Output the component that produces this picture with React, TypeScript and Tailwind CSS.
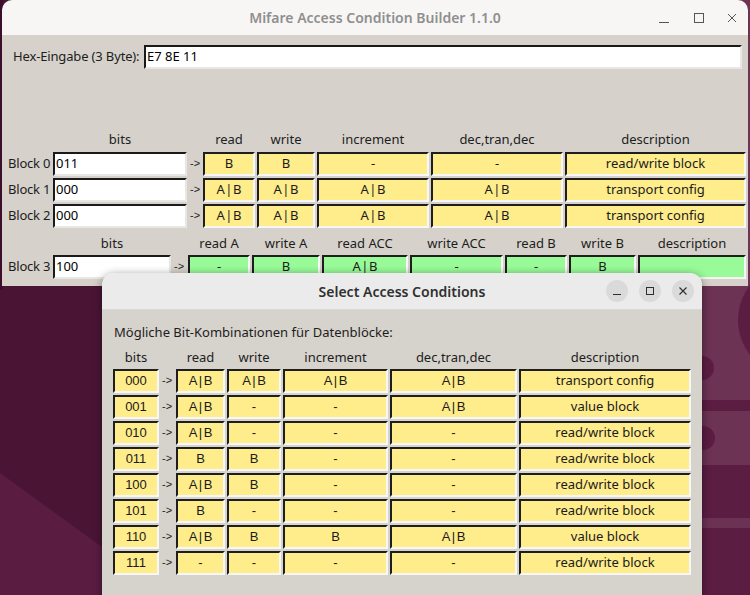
import React from 'react';

const ui = { fontFamily: '"Noto Sans", "Open Sans", sans-serif' };
const arial = { fontFamily: '"Liberation Sans", Arial, sans-serif' };

const sunken =
  'border-2 border-t-[#1e1e1e] border-l-[#1e1e1e] border-b-[#f7f7f7] border-r-[#f7f7f7]';

function show(v: string, wide: boolean) {
  if (!v.includes('|')) return v;
  const [a, b] = v.split('|');
  return (
    <>
      {a}
      <span className={wide ? 'mx-[1.5px]' : 'mx-[0.5px]'}>|</span>
      {b}
    </>
  );
}

function Cell({ w, bg, children, font }: { w: string; bg: string; children?: string; font?: React.CSSProperties }) {
  return (
    <div
      className={`${w} ${bg} ${sunken} h-[24px] flex items-center justify-center text-[13px] text-[#1b1b1b] shrink-0`}
      style={font}
    >
      {show(children ?? '', !!font)}
    </div>
  );
}

function Entry({ w, value }: { w: string; value: string }) {
  return (
    <div
      className={`${w} h-[24px] bg-white border-2 border-t-[#1a1a1a] border-l-[#1a1a1a] border-b-[#e9e7e3] border-r-[#e9e7e3] flex items-center pl-[1px] text-[13px] text-black shrink-0`}
    >
      {value}
    </div>
  );
}

function Arrow({ w }: { w: string }) {
  return (
    <div className={`${w} h-[24px] flex items-start pt-[3px] pl-[3px] text-[11px] text-[#222] shrink-0`} style={arial}>
      -&gt;
    </div>
  );
}

const dataCols = ['w-[52px]', 'w-[58px]', 'w-[112px]', 'w-[132px]', 'w-[181px]'];
const dataHead = ['read', 'write', 'increment', 'dec,tran,dec', 'description'];
const blocks = [
  { name: 'Block 0', bits: '011', vals: ['B', 'B', '-', '-', 'read/write block'] },
  { name: 'Block 1', bits: '000', vals: ['A|B', 'A|B', 'A|B', 'A|B', 'transport config'] },
  { name: 'Block 2', bits: '000', vals: ['A|B', 'A|B', 'A|B', 'A|B', 'transport config'] },
];

const trailCols = ['w-[62px]', 'w-[68px]', 'w-[86px]', 'w-[93px]', 'w-[62px]', 'w-[67px]', 'w-[108px]'];
const trailHead = ['read A', 'write A', 'read ACC', 'write ACC', 'read B', 'write B', 'description'];
const trailVals = ['-', 'B', 'A|B', '-', '-', 'B', ''];

const dlgCols = ['w-[49px]', 'w-[54px]', 'w-[105px]', 'w-[127px]', 'w-[172px]'];
const dlgRows = [
  ['000', 'A|B', 'A|B', 'A|B', 'A|B', 'transport config'],
  ['001', 'A|B', '-', '-', 'A|B', 'value block'],
  ['010', 'A|B', '-', '-', '-', 'read/write block'],
  ['011', 'B', 'B', '-', '-', 'read/write block'],
  ['100', 'A|B', 'B', '-', '-', 'read/write block'],
  ['101', 'B', '-', '-', '-', 'read/write block'],
  ['110', 'A|B', 'B', 'B', 'A|B', 'value block'],
  ['111', '-', '-', '-', '-', 'read/write block'],
];

function Wallpaper() {
  return (
    <svg className="absolute inset-0" width="750" height="595" viewBox="0 0 750 595">
      <rect width="750" height="595" fill="#4a1535" />
      <rect x="0" y="0" width="3" height="290" fill="#3c0e2b" />
      <polygon points="0,473 102,547 102,595 0,595" fill="#5b1c42" />
      <rect x="690" y="0" width="60" height="400" fill="#6c3354" />
      <rect x="690" y="400" width="60" height="11" fill="#5c1d42" />
      <rect x="690" y="411" width="60" height="54" fill="#6c3354" />
      <rect x="690" y="465" width="60" height="130" fill="#5c1d42" />
      <rect x="690" y="518" width="60" height="10" fill="#6b3253" />
      <circle cx="795" cy="320" r="57" fill="#5c1d42" />
      <circle cx="702" cy="368" r="12" fill="#5c1d42" />
      <circle cx="703" cy="438" r="12" fill="#5c1d42" />
    </svg>
  );
}

function MainWindow() {
  return (
    <div className="absolute left-[2px] top-0 w-[746px] h-[286px] rounded-t-[10px] overflow-hidden flex flex-col" style={ui}>
      <div className="h-[35px] bg-[#f7f6f5] relative flex items-center justify-center shrink-0">
        <span className="text-[14px] font-semibold text-[#8f8f8f]">Mifare Access Condition Builder 1.1.0</span>
        <div className="absolute right-0 top-0 h-full flex items-center">
          <svg width="14" height="14" viewBox="0 0 14 14" className="mr-[21px]">
            <line x1="2" y1="11.5" x2="12" y2="11.5" stroke="#555" strokeWidth="1" />
          </svg>
          <svg width="14" height="14" viewBox="0 0 14 14" className="mr-[19px]">
            <rect x="2.5" y="2.5" width="9" height="9" fill="none" stroke="#555" strokeWidth="1" />
          </svg>
          <svg width="14" height="14" viewBox="0 0 14 14" className="mr-[9px]">
            <path d="M3 3 L11 11 M11 3 L3 11" stroke="#555" strokeWidth="1" />
          </svg>
        </div>
      </div>
      <div className="flex-1 bg-[#d6d2cb] text-[#1d1d1d]">
        <div className="flex items-center mt-[10px]">
          <div className="w-[142px] pl-[11px] text-[13px] tracking-[-0.15px]">Hex-Eingabe (3 Byte):</div>
          <Entry w="w-[598px]" value="E7 8E 11" />
        </div>

        <div className="flex mt-[61px] h-[20px] items-center text-[13px]">
          <div className="w-[51px] shrink-0" />
          <div className="w-[134px] text-center shrink-0">bits</div>
          <div className="w-[16px] shrink-0" />
          <div className="flex gap-[2px]">
            {dataHead.map((h, i) => (
              <div key={h} className={`${dataCols[i]} text-center shrink-0`}>{h}</div>
            ))}
          </div>
        </div>
        <div className="flex flex-col gap-[2px] mt-[2px]">
          {blocks.map((b) => (
            <div key={b.name} className="flex items-center">
              <div className="w-[51px] pl-[6px] text-[13px] tracking-[-0.2px] shrink-0 whitespace-nowrap">{b.name}</div>
              <Entry w="w-[134px]" value={b.bits} />
              <Arrow w="w-[16px]" />
              <div className="flex gap-[2px]">
                {b.vals.map((v, i) => (
                  <Cell key={i} w={dataCols[i]} bg="bg-[#ffec8b]">{v}</Cell>
                ))}
              </div>
            </div>
          ))}
        </div>

        <div className="flex mt-[6px] h-[20px] items-center text-[13px]">
          <div className="w-[51px] shrink-0" />
          <div className="w-[118px] text-center shrink-0">bits</div>
          <div className="w-[17px] shrink-0" />
          <div className="flex gap-[2px]">
            {trailHead.map((h, i) => (
              <div key={h} className={`${trailCols[i]} text-center shrink-0`}>{h}</div>
            ))}
          </div>
        </div>
        <div className="flex items-center mt-[1px]">
          <div className="w-[51px] pl-[6px] text-[13px] tracking-[-0.2px] shrink-0 whitespace-nowrap">Block 3</div>
          <Entry w="w-[118px]" value="100" />
          <Arrow w="w-[17px]" />
          <div className="flex gap-[2px]">
            {trailVals.map((v, i) => (
              <Cell key={i} w={trailCols[i]} bg="bg-[#98fb98]">{v}</Cell>
            ))}
          </div>
        </div>
      </div>
    </div>
  );
}

function Dialog() {
  return (
    <div
      className="absolute left-[102px] top-[273px] w-[600px] h-[340px] rounded-t-[12px] overflow-hidden flex flex-col shadow-[0_2px_10px_rgba(0,0,0,0.45)]"
      style={ui}
    >
      <div className="h-[37px] bg-[#ebebeb] border-b border-[#d9d9d9] relative flex items-center justify-center shrink-0">
        <span className="text-[14px] font-semibold text-[#303030]">Select Access Conditions</span>
        <div className="absolute right-[8px] top-0 h-full flex items-center gap-[11px]">
          <div className="w-[22px] h-[22px] rounded-full bg-[#dadada] flex items-center justify-center">
            <svg width="12" height="12" viewBox="0 0 12 12">
              <line x1="2" y1="9.5" x2="10" y2="9.5" stroke="#2e2e2e" strokeWidth="1" />
            </svg>
          </div>
          <div className="w-[22px] h-[22px] rounded-full bg-[#dadada] flex items-center justify-center">
            <svg width="12" height="12" viewBox="0 0 12 12">
              <rect x="2.5" y="2.5" width="7" height="7" fill="none" stroke="#2e2e2e" strokeWidth="1" />
            </svg>
          </div>
          <div className="w-[22px] h-[22px] rounded-full bg-[#dadada] flex items-center justify-center">
            <svg width="12" height="12" viewBox="0 0 12 12">
              <path d="M2.5 2.5 L9.5 9.5 M9.5 2.5 L2.5 9.5" stroke="#2e2e2e" strokeWidth="1.1" />
            </svg>
          </div>
        </div>
      </div>
      <div className="flex-1 bg-[#d6d2cc] text-[#1d1d1d] pl-[11px]">
        <div className="pt-[13px] pl-[1px] text-[13px] h-[30px]">Mögliche Bit-Kombinationen für Datenblöcke:</div>
        <div className="flex mt-[8px] h-[20px] items-center text-[13px]">
          <div className="w-[46px] text-center shrink-0">bits</div>
          <div className="w-[17px] shrink-0" />
          <div className="flex gap-[2px]">
            {dataHead.map((h, i) => (
              <div key={h} className={`${dlgCols[i]} text-center shrink-0`}>{h}</div>
            ))}
          </div>
        </div>
        <div className="flex flex-col gap-[2px] mt-[1px]">
          {dlgRows.map((r) => (
            <div key={r[0]} className="flex">
              <Cell w="w-[46px]" bg="bg-[#ffec8b]" font={arial}>{r[0]}</Cell>
              <Arrow w="w-[17px]" />
              <div className="flex gap-[2px]">
                {r.slice(1).map((v, i) => (
                  <Cell key={i} w={dlgCols[i]} bg="bg-[#ffec8b]" font={i < 4 ? arial : undefined}>{v}</Cell>
                ))}
              </div>
            </div>
          ))}
        </div>
      </div>
    </div>
  );
}

export default function App() {
  return (
    <div className="relative w-[750px] h-[595px] overflow-hidden">
      <Wallpaper />
      <MainWindow />
      <Dialog />
    </div>
  );
}
